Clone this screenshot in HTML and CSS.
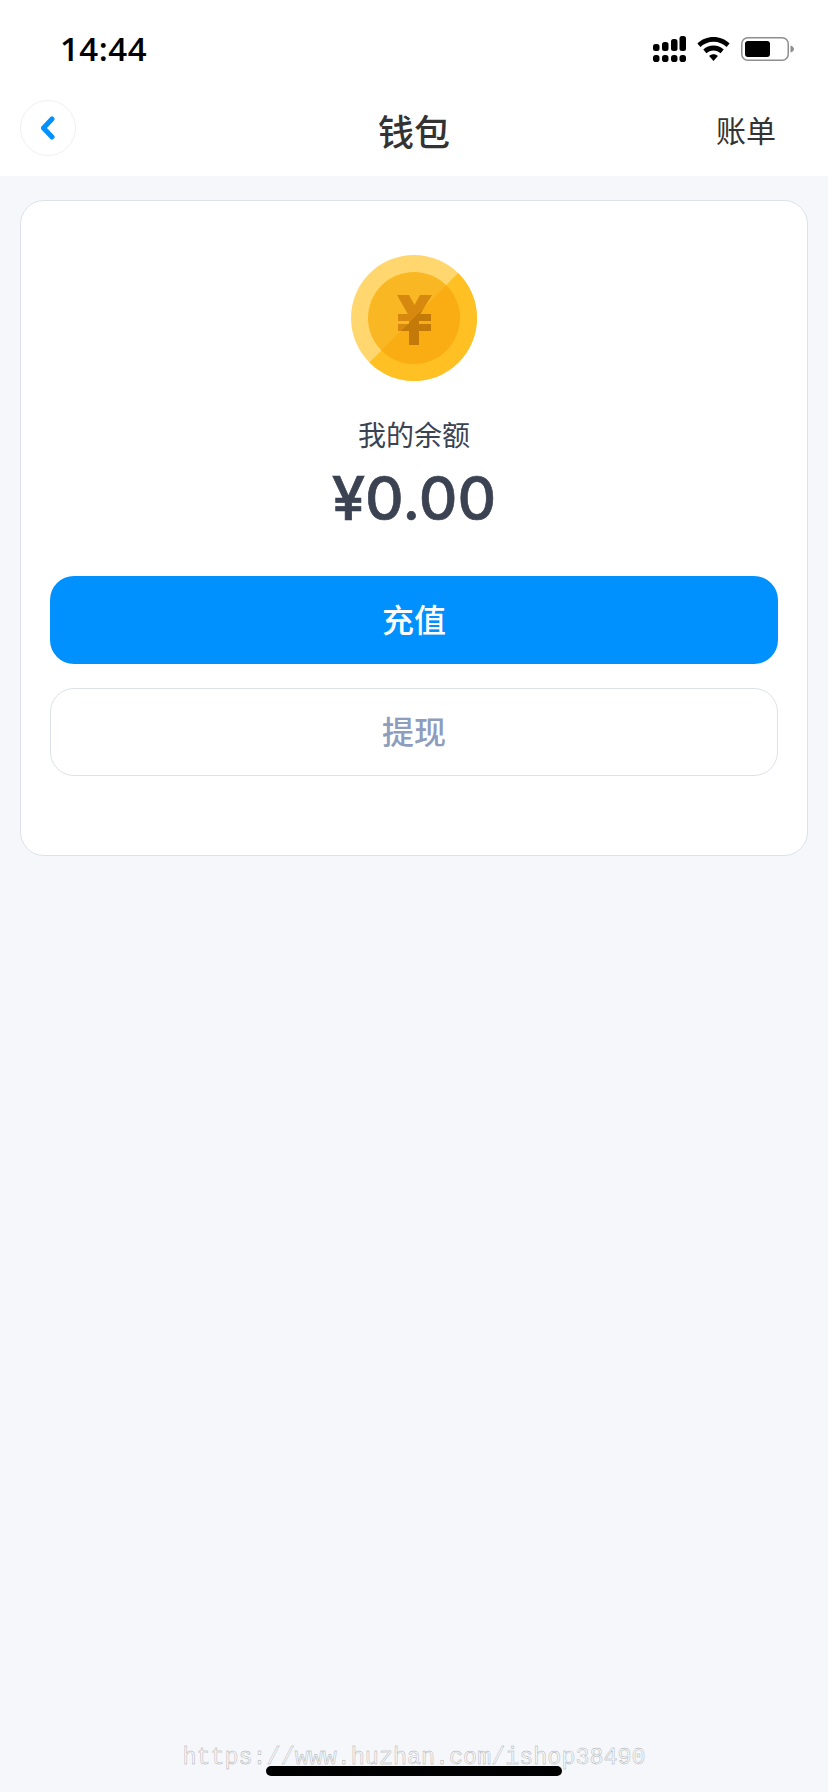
FILE: index.html
```html
<!DOCTYPE html>
<html lang="zh-CN">
<head>
<meta charset="utf-8">
<title>钱包</title>
<link rel="stylesheet" href="styles.css">
</head>
<body>
<div class="page">
  <header class="header">
    <div class="status">
      <span class="time">14:44</span>
      <div class="status-icons">
        <svg class="signal" width="33" height="26" viewBox="0 0 33 26" fill="#000">
          <rect x="0" y="8" width="6.5" height="7" rx="2.5"/><rect x="9" y="6" width="6.5" height="9" rx="2.5"/><rect x="18" y="3" width="6.5" height="12" rx="2.5"/><rect x="26.5" y="0" width="6.5" height="15" rx="2.5"/>
          <rect x="0" y="19" width="6.5" height="7" rx="2.8"/><rect x="9" y="19" width="6.5" height="7" rx="2.8"/><rect x="18" y="19" width="6.5" height="7" rx="2.8"/><rect x="26.5" y="19" width="6.5" height="7" rx="2.8"/>
        </svg>
        <svg class="wifi" width="33" height="24" viewBox="0 0 33 24" fill="#000">
          <path d="M16.5 0C10.3 0 4.700 2.400.4 6.400l3 3.600C6.900 6.800 11.500 4.800 16.500 4.800s9.600 2 13.100 5.200l3-3.600C28.300 2.400 22.700 0 16.500 0z"/>
          <path d="M16.500 8.600c-3.900 0-7.500 1.500-10.200 4l3.100 3.600c1.900-1.700 4.400-2.800 7.100-2.800s5.200 1.100 7.100 2.800l3.100-3.600c-2.700-2.500-6.300-4-10.200-4z"/>
          <path d="M16.500 17.200c-1.700 0-3.200.6-4.400 1.700l4.400 5.100 4.400-5.100c-1.200-1.100-2.700-1.700-4.400-1.700z"/>
        </svg>
        <svg class="battery" width="53" height="24" viewBox="0 0 53 24">
          <rect x=".75" y=".75" width="46.500" height="22.500" rx="6" fill="none" stroke="#8e8e8e" stroke-width="1.500"/>
          <rect x="4" y="4" width="25" height="16" rx="3" fill="#000"/>
          <path d="M49.500 8.500c2 .5 3.500 2 3.500 3.500s-1.500 3-3.500 3.500z" fill="#8e8e8e"/>
        </svg>
      </div>
    </div>
    <nav class="nav">
      <button class="back" type="button" aria-label="返回">
        <svg width="14" height="24" viewBox="0 0 14 24"><path d="M11 3 2.500 12 11 21" fill="none" stroke="#0091ff" stroke-width="5" stroke-linecap="round" stroke-linejoin="round"/></svg>
      </button>
      <h1 class="title">钱包</h1>
      <a class="bill">账单</a>
    </nav>
  </header>

  <main class="card">
    <svg class="coin" width="126" height="126" viewBox="0 0 126 126">
      <defs>
        <clipPath id="half"><polygon points="126,-1 127,127 -1,127"/></clipPath>
      </defs>
      <circle cx="63" cy="63" r="63" fill="#ffd76e"/>
      <circle cx="63" cy="63" r="46" fill="#f9b823"/>
      <g fill="#d6880f">
        <polygon points="46,40 58,40 63.500,50 69,40 81,40 68,61 68,90 58,90 58,61"/>
        <rect x="47" y="59" width="33" height="7"/>
        <rect x="47" y="69" width="33" height="7"/>
      </g>
      <g clip-path="url(#half)">
        <circle cx="63" cy="63" r="63" fill="#fec022"/>
        <circle cx="63" cy="63" r="46" fill="#f9ad12"/>
        <g fill="#c47a08">
          <polygon points="46,40 58,40 63.500,50 69,40 81,40 68,61 68,90 58,90 58,61"/>
          <rect x="47" y="59" width="33" height="7"/>
          <rect x="47" y="69" width="33" height="7"/>
        </g>
      </g>
    </svg>
    <p class="label">我的余额</p>
    <p class="amount">¥0.00</p>
    <div class="actions">
      <button class="btn btn-primary" type="button">充值</button>
      <button class="btn btn-ghost" type="button">提现</button>
    </div>
  </main>

  <div class="watermark">https://www.huzhan.com/ishop38490</div>
  <div class="home-bar"></div>
</div>
</body>
</html>
```

FILE: styles.css
```css
* { box-sizing: border-box; }
html, body { margin: 0; padding: 0; }
body {
  background: #f5f7fb;
  font-family: "Noto Sans CJK SC", "Inter", sans-serif;
}
.page {
  position: relative;
  width: 828px;
  height: 1792px;
  overflow: hidden;
  display: flex;
  flex-direction: column;
}
.header { background: #fff; height: 176px; }
.status {
  height: 88px;
  padding: 9px 34px 0 60px;
  display: flex;
  align-items: center;
  justify-content: space-between;
}
.time {
  font-family: "Open Sans", sans-serif;
  font-size: 33px;
  font-weight: 600;
  line-height: 1;
  color: #000;
  letter-spacing: 0.5px;
}
.status-icons {
  display: flex;
  align-items: center;
  gap: 11px;
}
.nav {
  height: 80px;
  padding: 0 52px 0 20px;
  display: flex;
  align-items: center;
  justify-content: space-between;
  position: relative;
}
.back {
  width: 56px;
  height: 56px;
  padding: 0;
  border: 1px solid #eef0f6;
  border-radius: 50%;
  background: #fff;
  display: flex;
  align-items: center;
  justify-content: center;
}
.title {
  margin: 4px 0 0;
  font-size: 36px;
  font-weight: 500;
  line-height: 48px;
  color: #333;
  position: absolute;
  left: 0;
  right: 0;
  text-align: center;
  pointer-events: none;
}
.bill {
  margin-top: 2px;
  font-size: 30px;
  line-height: 44px;
  color: #333;
}
.card {
  margin: 24px 20px 0;
  height: 656px;
  padding: 54px 29px 0;
  background: #fff;
  border: 1px solid #dde1e9;
  border-radius: 24px;
  display: flex;
  flex-direction: column;
  align-items: center;
}
.coin { display: block; flex: none; }
.label {
  margin: 33px 0 0;
  font-size: 28px;
  line-height: 40px;
  color: #3b4252;
}
.amount {
  margin: 6px 0 0;
  font-family: "Inter", sans-serif;
  font-size: 60px;
  font-weight: 500;
  line-height: 76px;
  color: #3b4252;
  -webkit-text-stroke: 0.6px #3b4252;
}
.actions {
  margin-top: 40px;
  width: 100%;
  display: flex;
  flex-direction: column;
  gap: 24px;
}
.btn {
  height: 88px;
  border-radius: 24px;
  font-family: inherit;
  font-size: 32px;
  font-weight: 500;
  padding: 0 0 4px;
}
.btn-primary { background: #0091ff; border: 0; color: #fff; }
.btn-ghost { background: #fff; border: 1px solid #dde1e9; color: #8e9dbd; }
.watermark {
  position: absolute;
  left: 0;
  right: 0;
  top: 1744px;
  text-align: center;
  font-family: "Liberation Mono", monospace;
  font-size: 23.400px;
  line-height: 28px;
  color: #f5f7fb;
  -webkit-text-stroke: 0.4px #a8a8a8;
}
.home-bar {
  position: absolute;
  left: 266px;
  top: 1766px;
  width: 296px;
  height: 10px;
  border-radius: 5px;
  background: #000;
}
```
